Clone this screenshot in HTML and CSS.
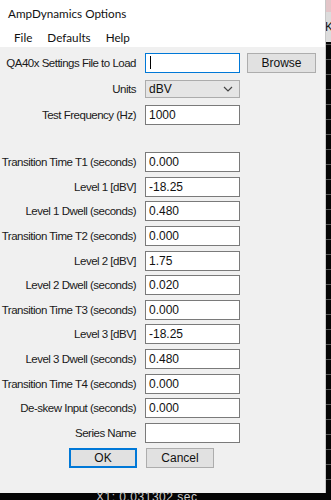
FILE: index.html
```html
<!DOCTYPE html>
<html lang="en">
<head>
    <meta charset="UTF-8">
    <meta name="viewport" content="width=device-width, initial-scale=1.0">
    <title>AmpDynamics Options</title>
    <link rel="stylesheet" href="styles.css">
</head>
<body>
    <div class="screen">
        <div class="dialog">
            <div class="titlebar">AmpDynamics Options</div>
            <div class="menubar">
                <span class="menu-item">File</span>
                <span class="menu-item">Defaults</span>
                <span class="menu-item">Help</span>
            </div>

            <div class="form">
                <div class="row row-file">
                    <label>QA40x Settings File to Load</label>
                    <div class="field focused"><span class="caret"></span></div>
                    <button class="btn btn-browse">Browse</button>
                </div>
                <div class="row row-units">
                    <label>Units</label>
                    <div class="select">
                        <span>dBV</span>
                        <svg width="10" height="6" viewBox="0 0 10 6"><path d="M1 1 L5 5 L9 1" fill="none" stroke="#444" stroke-width="1.2"/></svg>
                    </div>
                </div>
                <div class="row row-freq">
                    <label>Test Frequency (Hz)</label>
                    <div class="field">1000</div>
                </div>

                <div class="group">
                    <div class="row">
                        <label>Transition Time T1 (seconds)</label>
                        <div class="field">0.000</div>
                    </div>
                    <div class="row">
                        <label>Level 1 [dBV]</label>
                        <div class="field">-18.25</div>
                    </div>
                    <div class="row">
                        <label>Level 1 Dwell (seconds)</label>
                        <div class="field">0.480</div>
                    </div>
                    <div class="row">
                        <label>Transition Time T2 (seconds)</label>
                        <div class="field">0.000</div>
                    </div>
                    <div class="row">
                        <label>Level 2 [dBV]</label>
                        <div class="field">1.75</div>
                    </div>
                    <div class="row">
                        <label>Level 2 Dwell (seconds)</label>
                        <div class="field">0.020</div>
                    </div>
                    <div class="row">
                        <label>Transition Time T3 (seconds)</label>
                        <div class="field">0.000</div>
                    </div>
                    <div class="row">
                        <label>Level 3 [dBV]</label>
                        <div class="field">-18.25</div>
                    </div>
                    <div class="row">
                        <label>Level 3 Dwell (seconds)</label>
                        <div class="field">0.480</div>
                    </div>
                    <div class="row">
                        <label>Transition Time T4 (seconds)</label>
                        <div class="field">0.000</div>
                    </div>
                    <div class="row">
                        <label>De-skew Input (seconds)</label>
                        <div class="field">0.000</div>
                    </div>
                    <div class="row">
                        <label>Series Name</label>
                        <div class="field"></div>
                    </div>
                </div>

                <div class="actions">
                    <button class="btn btn-ok">OK</button>
                    <button class="btn btn-cancel">Cancel</button>
                </div>
            </div>
        </div>

        <!-- bits of the scope window behind the dialog -->
        <div class="side">
            <div class="side-pink"></div>
            <div class="side-light">K</div>
        </div>
        <div class="scope-bottom">X1: 0.031302 sec</div>
    </div>
</body>
</html>
```

FILE: styles.css
```css
body {
    margin: 0;
    background-color: #050505;
    font-family: "Liberation Sans", Arial, sans-serif;
    color: #111;
}
.screen {
    position: relative;
    width: 331px;
    height: 500px;
    overflow: hidden;
}
.dialog {
    width: 325px;
    height: 493px;
    background-color: #f0f0f0;
    border-right: 1px solid #c8c8c8;
}
.titlebar {
    height: 26px;
    background-color: #fff;
    padding-left: 8px;
    font-family: Lato, sans-serif;
    font-size: 11.7px;
    line-height: 26px;
}
.menubar {
    height: 21px;
    background-color: #fff;
    display: flex;
    gap: 15px;
    padding-left: 14px;
    font-family: Lato, sans-serif;
    font-size: 11.7px;
    line-height: 22px;
}
.form {
    padding-top: 6px;
}
.row {
    display: flex;
    align-items: center;
    height: 20px;
}
.row label {
    width: 136px;
    text-align: right;
    font-size: 11.5px;
    letter-spacing: -0.5px;
    margin-right: 9px;
    white-space: nowrap;
    color: #1a1a1a;
}
.field {
    box-sizing: border-box;
    width: 95px;
    height: 20px;
    background-color: #fff;
    border: 1px solid #7a7a7a;
    font-size: 12px;
    line-height: 18px;
    padding-left: 3px;
}
.field.focused {
    border-color: #0078d7;
}
.caret {
    display: block;
    width: 1px;
    height: 13px;
    background-color: #000;
    margin-top: 2px;
    margin-left: 1px;
}
.select {
    box-sizing: border-box;
    width: 95px;
    height: 18px;
    background-color: #e5e5e5;
    border: 1px solid #acacac;
    font-size: 12px;
    padding: 0 6px 0 3px;
    display: flex;
    align-items: center;
    justify-content: space-between;
}
.row-units {
    margin-top: 6px;
}
.row-freq {
    margin-top: 6px;
}
.group {
    margin-top: 27px;
    display: flex;
    flex-direction: column;
    gap: 4.64px;
}
.btn {
    box-sizing: border-box;
    height: 20px;
    background-color: #e1e1e1;
    border: 1px solid #adadad;
    font-family: "Liberation Sans", Arial, sans-serif;
    font-size: 12px;
    color: #111;
    padding: 0;
}
.btn-browse {
    width: 69px;
    margin-left: 7px;
}
.actions {
    display: flex;
    margin-top: 5px;
    padding-left: 69px;
    gap: 9px;
}
.btn-ok {
    width: 68px;
    border: 2px solid #0078d7;
}
.btn-cancel {
    width: 68px;
}
.side {
    position: absolute;
    top: 0;
    right: 0;
    width: 5px;
    height: 493px;
    background: repeating-linear-gradient(#050505 0, #050505 14px, #555 14px, #555 15px);
}
.side-pink {
    height: 12px;
    background-color: #e3c5c8;
}
.side-light {
    height: 30px;
    background-color: #dcdcdc;
    font-size: 12px;
    line-height: 30px;
    overflow: hidden;
    text-indent: -1px;
}
.scope-bottom {
    position: absolute;
    left: 96px;
    top: 490px;
    color: #cfcfcf;
    font-size: 12px;
    letter-spacing: 0.5px;
}
```
